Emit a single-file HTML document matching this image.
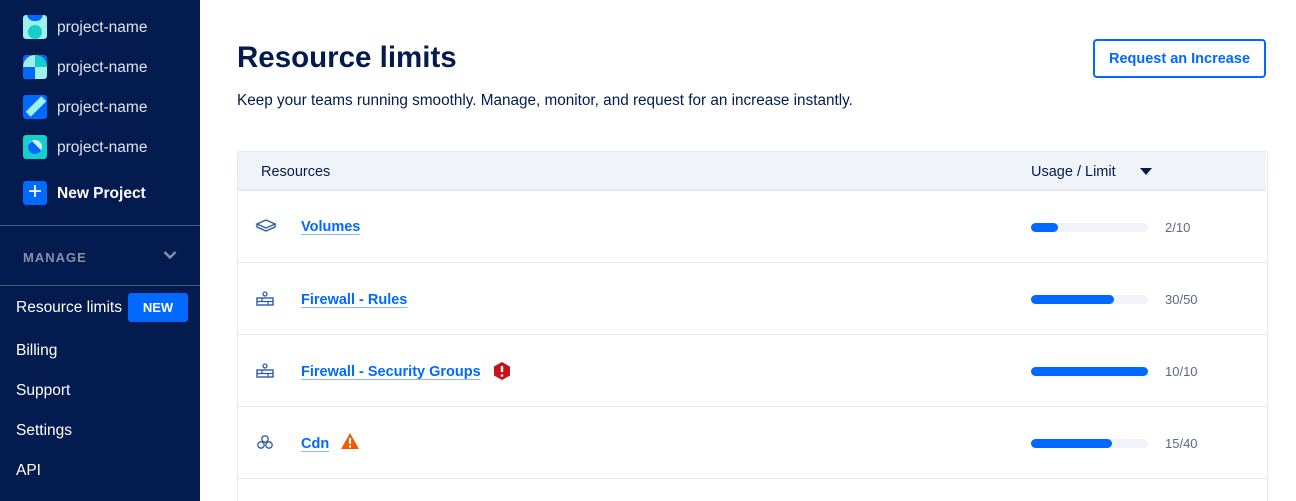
<!DOCTYPE html>
<html><head><style>
*{margin:0;padding:0;box-sizing:border-box}
html,body{width:1296px;height:501px;overflow:hidden}
body{background:#fff;font-family:"Liberation Sans",sans-serif;position:relative}
.sb{position:absolute;left:0;top:0;width:200px;height:501px;background:#031b4e}
.pj{position:absolute;left:23px;width:24px;height:24px;border-radius:3px;overflow:hidden}
.pt{position:absolute;left:57px;color:#dfe3ec;font-size:15.5px}
.nav{position:absolute;left:16px;color:#fff;font-size:15.5px}
.hr{position:absolute;left:0;width:200px;height:1px;background:#4a5a80}
h1{position:absolute;left:237px;top:41px;font-size:29.5px;color:#031b4e;font-weight:bold}
.sub{position:absolute;left:237px;top:92px;font-size:15.3px;color:#031b4e}
.btn{position:absolute;left:1093px;top:39px;width:173px;height:39px;border:2px solid #0069ff;border-radius:4px;color:#0069ff;font-size:14.5px;font-weight:bold;text-align:center;line-height:37px}
.tbl{position:absolute;left:237px;top:151px;width:1031px;height:350px;border:1px solid #e5e8ed;border-bottom:none;border-radius:3px 3px 0 0;overflow:hidden}
.th{position:absolute;left:0;top:0;width:1028px;height:39px;background:#f0f3f8;border-bottom:2px solid #e5e8ed}
.th span{position:absolute;top:12px;font-size:14.5px;color:#031b4e}
.row{position:absolute;left:0;width:1028px;height:72px;border-bottom:1px solid #e5e8ed}
.row a{position:absolute;left:63px;top:29px;font-size:14.5px;color:#0069ff;text-decoration:underline;text-decoration-color:#8ab8ff;text-underline-offset:3px;font-weight:bold}
.bar{position:absolute;left:793px;top:32px;width:117px;height:9px;border-radius:5px;background:#f0f3f8}
.bar i{display:block;height:9px;border-radius:5px;background:#0069ff}
.num{position:absolute;left:927px;top:29px;font-size:13px;color:#5b6987}
.ic{position:absolute;left:17px;top:25px}
</style></head><body>
<div class="sb">
<div class="pj" style="top:15px;background:#9ff0ec"><div style="position:absolute;left:4px;top:-8px;width:16px;height:14px;border-radius:8px;background:#0069ff"></div><div style="position:absolute;left:5px;top:10px;width:14px;height:14px;border-radius:7px;background:#15cdcb"></div></div>
<div class="pt" style="top:19px">project-name</div>
<div class="pj" style="top:55px;background:#0069ff"><div style="position:absolute;left:0;top:0;width:24px;height:24px;border-radius:12px 12px 0 0;background:#9ff0ec"></div><div style="position:absolute;left:12px;top:0;width:12px;height:12px;background:#15cdcb;border-radius:0 12px 0 0"></div><div style="position:absolute;left:0;top:12px;width:12px;height:12px;background:#0069ff"></div></div>
<div class="pt" style="top:59px">project-name</div>
<div class="pj" style="top:95px;background:#0069ff"><div style="position:absolute;left:2px;top:8px;width:22px;height:7px;background:#9ff0ec;transform:rotate(-45deg)"></div></div>
<div class="pt" style="top:99px">project-name</div>
<div class="pj" style="top:135px;background:#15cdcb"><div style="position:absolute;left:5px;top:5px;width:14px;height:14px;border-radius:7px;background:#cdf5f3;overflow:hidden"><div style="position:absolute;left:-4px;top:6px;width:20px;height:14px;background:#0069ff;transform:rotate(45deg)"></div></div></div>
<div class="pt" style="top:139px">project-name</div>
<div class="pj" style="top:181px;background:#0069ff;color:#fff;font-size:24px;line-height:22px;text-align:center">+</div>
<div class="pt" style="top:185px;color:#fff;font-weight:bold">New Project</div>
<div class="hr" style="top:225px"></div>
<div style="position:absolute;left:23px;top:250px;color:#8591ab;font-size:13px;font-weight:bold;letter-spacing:1px">MANAGE</div>
<svg style="position:absolute;left:163px;top:250px" width="14" height="10"><path d="M1.5 2l5.5 5.5 5.5-5.5" stroke="#8591ab" stroke-width="2.4" fill="none"/></svg>
<div class="hr" style="top:285px"></div>
<div class="nav" style="top:299px">Resource limits</div>
<div style="position:absolute;left:128px;top:293px;width:60px;height:29px;background:#0069ff;border-radius:3px;color:#fff;font-size:13px;font-weight:bold;text-align:center;line-height:29px">NEW</div>
<div class="nav" style="top:342px">Billing</div>
<div class="nav" style="top:382px">Support</div>
<div class="nav" style="top:422px">Settings</div>
<div class="nav" style="top:462px">API</div>
</div>
<h1>Resource limits</h1>
<div class="sub">Keep your teams running smoothly. Manage, monitor, and request for an increase instantly.</div>
<div class="btn">Request an Increase</div>
<div class="tbl">
<div class="th"><span style="left:23px">Resources</span><span style="left:793px">Usage / Limit</span>
<svg style="position:absolute;left:902px;top:16px" width="12" height="8"><path d="M0 0h12L6 7z" fill="#031b4e"/></svg></div>
<div class="row" style="top:39px;height:72px">
<svg class="ic" width="22" height="18"><path d="M2 8l9-4 9 4-9 4z M2 8v3l9 4 9-4V8" stroke="#2e5aa8" stroke-width="1.4" fill="none"/></svg>
<a style="top:28px">Volumes</a><div class="bar" style="top:32px"><i style="width:27px"></i></div><div class="num" style="top:29px">2/10</div></div>
<div class="row" style="top:111px">
<svg class="ic" width="22" height="20"><circle cx="10" cy="6" r="2" stroke="#2e5aa8" fill="none" stroke-width="1.3"/><rect x="2" y="10" width="16" height="7" stroke="#2e5aa8" fill="none" stroke-width="1.4"/><path d="M2 13.5h16M7 10v3.5M13 13.5v3.5" stroke="#2e5aa8" stroke-width="1.2"/></svg>
<a>Firewall - Rules</a><div class="bar"><i style="width:83px"></i></div><div class="num">30/50</div></div>
<div class="row" style="top:183px">
<svg class="ic" width="22" height="20"><circle cx="10" cy="6" r="2" stroke="#2e5aa8" fill="none" stroke-width="1.3"/><rect x="2" y="10" width="16" height="7" stroke="#2e5aa8" fill="none" stroke-width="1.4"/><path d="M2 13.5h16M7 10v3.5M13 13.5v3.5" stroke="#2e5aa8" stroke-width="1.2"/></svg>
<a>Firewall - Security Groups</a>
<svg style="position:absolute;left:255px;top:27px" width="18" height="18"><path d="M9 0l8 4.5v9L9 18 1 13.5v-9z" fill="#c8111a"/><path d="M9 4v6" stroke="#fff" stroke-width="2.4"/><circle cx="9" cy="13.5" r="1.3" fill="#fff"/></svg>
<div class="bar"><i style="width:117px"></i></div><div class="num">10/10</div></div>
<div class="row" style="top:255px">
<svg class="ic" width="22" height="20"><circle cx="10" cy="7" r="3.2" stroke="#2e5aa8" fill="none" stroke-width="1.3"/><circle cx="6" cy="13" r="3.2" stroke="#2e5aa8" fill="none" stroke-width="1.3"/><circle cx="14" cy="13" r="3.2" stroke="#2e5aa8" fill="none" stroke-width="1.3"/></svg>
<a>Cdn</a>
<svg style="position:absolute;left:103px;top:26px" width="18" height="17"><path d="M9 0l9 16H0z" fill="#f55a00"/><path d="M9 5v6" stroke="#fff" stroke-width="2.2"/><circle cx="9" cy="13.5" r="1.2" fill="#fff"/></svg>
<div class="bar"><i style="width:81px"></i></div><div class="num">15/40</div></div>
</div>
</body></html>
